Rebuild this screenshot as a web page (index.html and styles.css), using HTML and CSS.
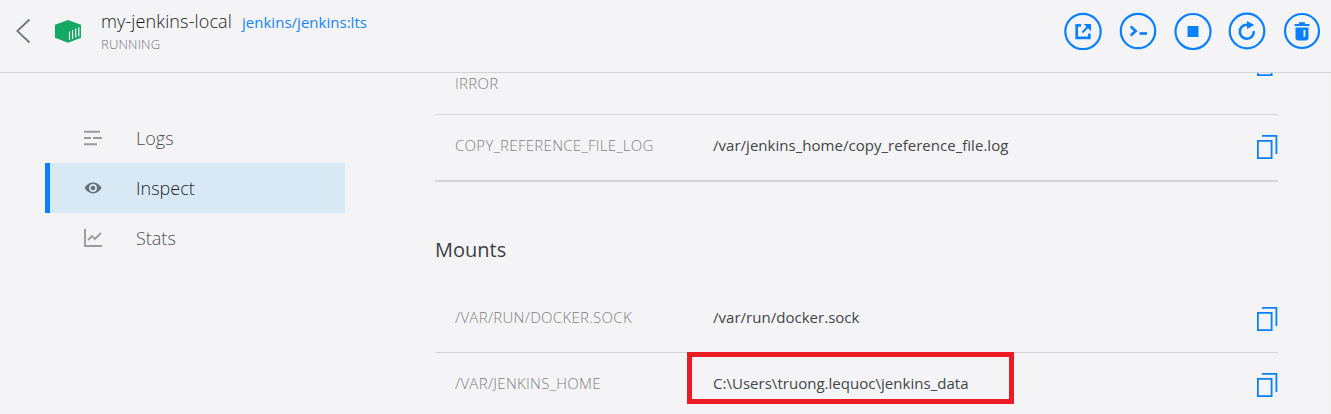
FILE: index.html
```html
<!DOCTYPE html>
<html lang="en">
<head>
<meta charset="utf-8">
<title>my-jenkins-local</title>
<link rel="stylesheet" href="styles.css">
</head>
<body>
<svg class="defs" width="0" height="0">
  <symbol id="copy" viewBox="0 0 22 26">
    <path d="M1.9 6.9h13.7v17.2H1.9z M6 1.9h14.4v18" fill="none" stroke="#0a80ff" stroke-width="1.8"/>
  </symbol>
</svg>
<header class="header">
  <svg class="back" width="16" height="26" viewBox="0 0 16 26"><path d="M13.500 1.500 1.200 13l12.300 11.500" fill="none" stroke="#6c757d" stroke-width="1.8"/></svg>
  <svg class="logo" width="28" height="24" viewBox="0 0 28 24">
    <path d="M14 1 27 5.700v13L14 23.700 1 18.700v-13z" fill="#15a862"/>
    <path d="M15.500 12.500v8.500M18.600 11v8.700M21.700 9.500v9M24.800 8.300v9" stroke="#f4f4f6" stroke-width="1.200"/>
  </svg>
  <div class="heading">
    <div class="title-line"><span class="name">my-jenkins-local</span><span class="image">jenkins/jenkins:lts</span></div>
    <div class="status">RUNNING</div>
  </div>
  <div class="actions">
    <svg width="38" height="38" viewBox="0 0 38 38"><circle cx="19" cy="19.500" r="17.700"/><path d="M17 13.300h-4.300v12.500h12.600V21.500" stroke-width="2.700"/><path d="M18.300 20.500 24.500 14.300" stroke-width="2"/><path class="fill" d="M19.700 12H27v7.300z"/></svg>
    <svg width="38" height="38" viewBox="0 0 38 38"><circle cx="19" cy="19" r="17.200"/><path d="m11.700 14.500 5 4.500-5 4.500" stroke-width="2.600"/><path d="M20.500 21.500H28" stroke-width="2.700"/></svg>
    <svg width="38" height="38" viewBox="0 0 38 38"><circle cx="19" cy="19.500" r="17.500"/><path class="fill" d="M13.500 14h11v11h-11z"/></svg>
    <svg width="38" height="38" viewBox="0 0 38 38"><circle cx="19" cy="19" r="17.300"/><path d="M20.500 12.700h-2a7 7 0 1 0 7.300 6.500" stroke-width="2.600"/><path class="fill" d="M19 9 26.300 13 19 17z"/></svg>
    <svg width="38" height="38" viewBox="0 0 38 38"><circle cx="19" cy="19" r="17"/><path d="M11.500 13.100h15M16 11.300h6" stroke-width="2"/><path class="fill" fill-rule="evenodd" d="M12.500 15.500h13v10.300q0 2.700-2.700 2.700h-7.600q-2.700 0-2.700-2.700zM20.500 18v6.800h1.800V18z"/></svg>
  </div>
</header>
<div class="main">
  <nav class="nav">
    <div class="item"><svg width="20" height="20" viewBox="0 0 20 20"><path d="M1 3.700h16M1 10h7M10 10h9M1 16.200h13" stroke="#999b9e" stroke-width="2"/></svg>Logs</div>
    <div class="item active"><svg width="20" height="20" viewBox="0 0 20 20"><path d="M1.500 10Q5 4.600 10 4.600T18.700 10Q15 15.400 10 15.400T1.500 10z" fill="#667078"/><circle cx="10" cy="10" r="3.100" fill="none" stroke="#d8e9f5" stroke-width="1.700"/></svg>Inspect</div>
    <div class="item"><svg width="20" height="20" viewBox="0 0 20 20"><path d="M2 1v17h17" fill="none" stroke="#999b9e" stroke-width="1.900"/><path d="m5 12 4-4 3 3 6-6" fill="none" stroke="#999b9e" stroke-width="1.900"/></svg>Stats</div>
  </nav>
  <main class="content">
    <div class="row clipped"><span class="key">IRROR</span><span class="value"></span><svg class="copy" width="22" height="26"><use href="#copy"/></svg></div>
    <div class="row last"><span class="key">COPY_REFERENCE_FILE_LOG</span><span class="value">/var/jenkins_home/copy_reference_file.log</span><svg class="copy" width="22" height="26"><use href="#copy"/></svg></div>
    <h2 class="section">Mounts</h2>
    <div class="row"><span class="key">/VAR/RUN/DOCKER.SOCK</span><span class="value">/var/run/docker.sock</span><svg class="copy" width="22" height="26"><use href="#copy"/></svg></div>
    <div class="row"><span class="key">/VAR/JENKINS_HOME</span><span class="value">C:\Users\truong.lequoc\jenkins_data</span><svg class="copy" width="22" height="26"><use href="#copy"/></svg></div>
  </main>
  <div class="scrollbar"></div>
</div>
<div class="highlight"></div>
</body>
</html>
```

FILE: styles.css
```css
* { box-sizing: border-box; }
body {
  margin: 0;
  height: 414px;
  overflow: hidden;
  background: #f4f4f6;
  color: #3c4043;
  font-family: "Open Sans", sans-serif;
  display: flex;
  flex-direction: column;
}
.defs { display: none; }
svg { display: block; flex: none; }
.header {
  height: 73px;
  flex: none;
  border-bottom: 1px solid #d3d4d7;
  display: flex;
  align-items: flex-start;
  padding: 0 11px 0 16px;
}
.back { margin-top: 18px; }
.logo { margin: 19px 0 0 22px; }
.heading { margin: 8px 0 0 19px; }
.title-line { display: flex; align-items: baseline; height: 26px; line-height: 26px; white-space: nowrap; }
.name { font-size: 18px; font-weight: 300; color: #161b1e; letter-spacing: 0.13px; }
.image { font-size: 15px; color: #1485fb; margin-left: 10px; font-weight: 400; letter-spacing: 0.02px; }
.status { font-size: 13px; line-height: 18px; margin-top: 1px; color: #6c757b; font-weight: 300; letter-spacing: 0.2px; }
.actions { margin: 12px -1px 0 auto; display: flex; gap: 16.700px; }
.actions svg { fill: none; stroke: #0a80ff; stroke-width: 2.200; }
.actions .fill { fill: #0a80ff; stroke: none; }
.main { flex: 1; min-height: 0; display: flex; padding-left: 45px; }
.nav { width: 300px; padding-top: 40px; flex: none; }
.item {
  height: 50px;
  display: flex;
  align-items: center;
  gap: 33px;
  padding-left: 38px;
  font-size: 18px;
  font-weight: 300;
  color: #4c5054;
}
.item.active { background: #d8e9f5; border-left: 5px solid #087fff; padding-left: 33px; color: #20282d; }
.content { width: 843px; margin-left: 90px; flex: none; overflow: hidden; }
.row {
  display: flex;
  height: 66px;
  border-bottom: 1px solid #d3d4d7;
  padding-left: 20px;
  font-size: 15px;
  line-height: 20px;
  white-space: nowrap;
}
.key { width: 258px; padding-top: 20px; color: #7d7f82; font-weight: 300; letter-spacing: 0.3px; }
.value { flex: 1; padding-top: 20px; color: #424548; letter-spacing: 0.025px; }
.copy { margin-top: 19px; }
.row.clipped { height: 42px; }
.clipped .key { padding-top: 0; }
.clipped .copy { margin-top: -22px; }
.row.last { height: 67px; border-bottom-width: 2px; }
.section { margin: 0; height: 105px; padding-top: 54px; font-size: 20px; line-height: 28px; font-weight: 400; color: #3c3f42; }
.scrollbar { width: 3px; margin-left: auto; background: #f2f2f3; }
.highlight { position: absolute; left: 687px; top: 352px; width: 327px; height: 52px; border: 5px solid #ed1c24; }
```
